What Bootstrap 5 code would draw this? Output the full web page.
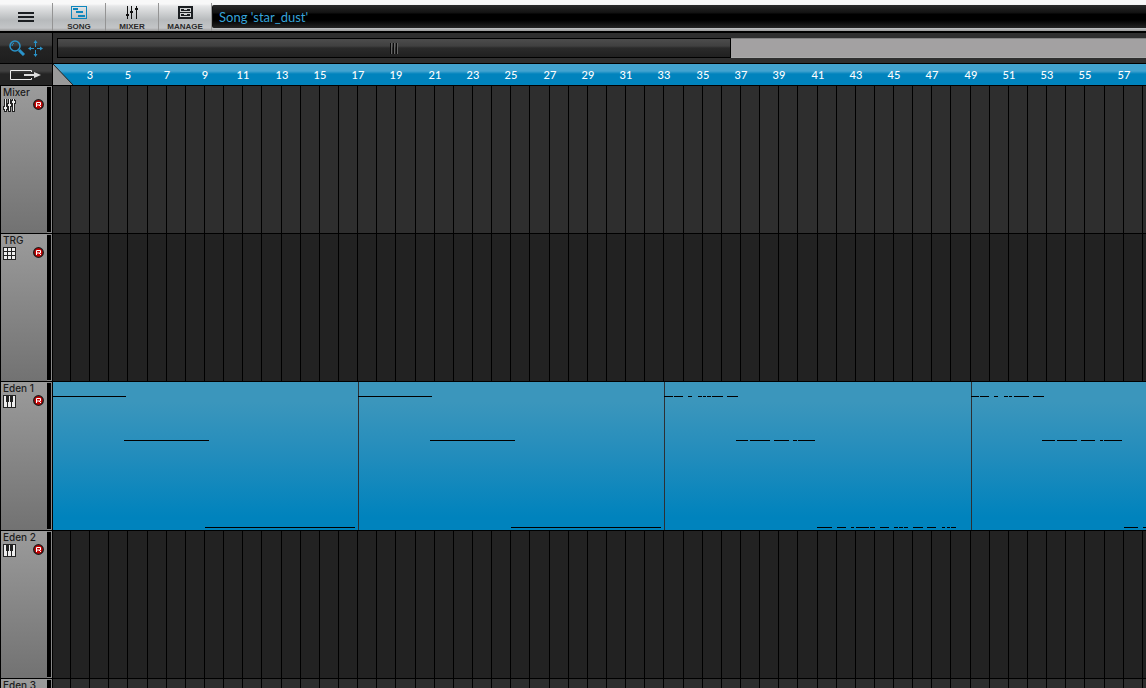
<!DOCTYPE html>
<html lang="en">
<head>
<meta charset="utf-8">
<meta name="viewport" content="width=device-width, initial-scale=1">
<title>Song editor</title>
<link href="https://cdn.jsdelivr.net/npm/bootstrap@5.3.0/dist/css/bootstrap.min.css" rel="stylesheet">
<style>
  :root { --side: 53px; }
  body { background: #222; font-family: "Lato", "Liberation Sans", sans-serif; color: #1c1c1c; }
  button { background: none; border: 0; padding: 0; color: inherit; }
  svg { display: block; }

  .topbar { height: 31px; background: linear-gradient(#f8f8f8 4px, #e6e7e8 6px, #b7babc 20px, #c3c5c7 28px, #999 31px); }
  .tool { width: 53px; padding-top: 3px; }
  .tool > span { height: 28px; border-right: 1px solid #949494; padding-top: 3px; font: bold 8px/8px "Liberation Sans", sans-serif; color: #2a2a2a; }
  .tool svg { margin-bottom: 4px; }
  .readout { margin: 5px 0 3px; background: linear-gradient(#2a2a2a, #111 8px, #000 9px, #000 15px, #242424 23px); color: #36a3d9; font-size: 13px; line-height: 24px; padding-left: 6px; border-left: 1px solid #111; border-radius: 2px 0 0 2px; }

  .side { width: var(--side); border-right: 1px solid #000; }
  .navrow { height: 33px; border-top: 2px solid #000; border-bottom: 1px solid #000; background: #2f2f2f; }
  .navtools { background: linear-gradient(#474747, #3a3a3a 12px, #242424 14px, #1e1e1e); }
  .scrolltrack { background: #a3a1a2; height: 20px; border-top: 1px solid #838383; border-bottom: 1px solid #aaa; margin: 5px 0 0 4px; }
  .thumb { height: 20px; margin-top: -1px; border: 1px solid #000; background: linear-gradient(#4c4c4c, #404040 7px, #2a2a2a 9px, #202020); }

  .rulerrow { height: 22px; border-bottom: 1px solid #000; background: linear-gradient(#42a3d0 7px, #0083bd 10px); }
  .export { background: linear-gradient(#404040 7px, #242424 10px); }
  .ruler text { fill: #fff; font: 500 11px "Lato", sans-serif; text-anchor: middle; }

  .lane { height: 148px; border-bottom: 1px solid #000; background: #222; }
  .lane.lit { background: #2e2e2e; }
  .lane.clips { height: 149px; background: linear-gradient(#3b96bc 20px, #248dbc 70px, #0083bd 135px); }
  .track { background: linear-gradient(#9b9b9b, #727272); border-left: 1px solid #000; padding: 0 3px 1px 2px; }
  .trackname { font: 500 10px/13px "Inter", sans-serif; white-space: nowrap; }
  .rec { width: 11px; height: 11px; }
  .meter { width: 5px; background: #000; border: solid #888; border-width: 1px 1px 1px 0; }
</style>
</head>
<body class="vh-100 overflow-hidden d-flex flex-column">

<header class="topbar d-flex flex-shrink-0">
  <button class="tool flex-shrink-0" type="button" aria-label="Menu">
    <span class="d-flex flex-column align-items-center">
      <svg width="16" height="20" stroke="#1b1e21" stroke-width="2"><path d="M0 7h16M0 11h16M0 15h16"/></svg>
    </span>
  </button>
  <button class="tool flex-shrink-0" type="button">
    <span class="d-flex flex-column align-items-center">
      <svg width="16" height="13" fill="#0d86bd" shape-rendering="crispEdges"><path fill-rule="evenodd" d="M0 0h16v13H0zM1 1v11h14V1z"/><path d="M2 2h5v2H2zM5 5h7v2H5zM7 9h7v2H7z"/></svg>
      SONG
    </span>
  </button>
  <button class="tool flex-shrink-0" type="button">
    <span class="d-flex flex-column align-items-center">
      <svg width="12" height="13" fill="#111" shape-rendering="crispEdges"><path d="M1 0h1v13H1zM5 0h1v13H5zM10 0h1v13h-1zM0 8h3v2H0zM4 5h3v2H4zM9 2h3v2H9z"/></svg>
      MIXER
    </span>
  </button>
  <button class="tool flex-shrink-0" type="button">
    <span class="d-flex flex-column align-items-center">
      <svg width="15" height="13" shape-rendering="crispEdges"><path fill="#1b1e21" d="M0 0h15v13H0z"/><path fill="#d0d2d3" d="M2 2h11v4H2zM2 7h11v4H2z"/><path fill="#1b1e21" d="M3 3h9v2H3zM3 8h9v2H3z"/><path fill="#d0d2d3" d="M6 3h3v1H6zM6 8h3v1H6z"/></svg>
      MANAGE
    </span>
  </button>
  <div class="readout flex-grow-1">Song 'star_dust'</div>
</header>

<div class="navrow d-flex flex-shrink-0">
  <div class="side navtools d-flex flex-shrink-0 align-items-center ps-2">
    <button type="button" aria-label="Zoom">
      <svg width="18" height="16" fill="none" stroke="#2a93c9"><circle cx="7" cy="6" r="5" stroke-width="1.5"/><path d="M4 6a3 3 0 0 1 2-3"/><path d="M11 10l5 5" stroke-width="3"/></svg>
    </button>
    <button type="button" aria-label="Pan" class="me-auto">
      <svg width="18" height="18" fill="#2a93c9"><path d="M9 2h1v6H9zM9 11h1v6H9zM3 9h5v1H3zM11 9h5v1h-5z" shape-rendering="crispEdges"/><path d="M9.500 1l2 3h-4zM9.500 18l-2-3h4zM2 9.500l3-2v4zM17 9.500l-3-2v4z"/></svg>
    </button>
  </div>
  <div class="flex-grow-1">
    <div class="scrolltrack" role="scrollbar" aria-label="Song position" aria-controls="lanes" aria-valuenow="0">
      <div class="thumb d-flex justify-content-center align-items-center" style="width:61.9%">
        <svg width="9" height="11" shape-rendering="crispEdges"><path fill="#090909" d="M0 0h1v11H0zM3 0h1v11H3zM6 0h1v11H6z"/><path fill="#666" d="M1 0h1v11H1zM4 0h1v11H4zM7 0h1v11H7z"/></svg>
      </div>
    </div>
  </div>
</div>

<div class="rulerrow d-flex flex-shrink-0">
  <button class="side export flex-shrink-0 d-flex align-items-center" type="button" aria-label="Follow playback">
    <svg width="42" height="13" fill="none"><path d="M31.500 4V2.500h-21v9h21V10" stroke="#eee"/><path d="M24 6h10V4l7 3-7 3V8H24z" fill="#ddd"/></svg>
  </button>
  <svg class="ruler flex-grow-1" height="21"><path d="M0 0l20 21H0z" fill="#999"/><path d="M0 0l20 21" stroke="#222"/></svg>
</div>

<main id="lanes" class="flex-grow-1 overflow-hidden"></main>

<svg width="0" height="0" class="position-absolute" aria-hidden="true">
  <symbol id="i-mixer" viewBox="0 0 13 13"><g shape-rendering="crispEdges"><path fill="#222" d="M1 0h3v13H1zM5 0h3v13H5zM9 0h3v13H9zM0 7h5v4H0zM4 4h5v4H4zM8 1h5v4H8z"/><path fill="#eee" d="M2 0h1v12H2zM6 0h1v12H6zM10 0h1v12h-1zM1 8h3v2H1zM5 5h3v2H5zM9 2h3v2H9z"/></g></symbol>
  <symbol id="i-grid" viewBox="0 0 13 13"><g shape-rendering="crispEdges"><path fill="#222" d="M0 0h13v13H0z"/><path fill="#eee" d="M1 1h3v3H1zM5 1h3v3H5zM9 1h3v3H9zM1 5h3v3H1zM5 5h3v3H5zM9 5h3v3H9zM1 9h3v3H1zM5 9h3v3H5zM9 9h3v3H9z"/></g></symbol>
  <symbol id="i-keys" viewBox="0 0 13 13"><g shape-rendering="crispEdges"><path fill="#222" d="M0 0h13v13H0z"/><path fill="#eee" d="M1 1h11v11H1z"/><path fill="#222" d="M3 1h3v6H3zM7 1h3v6H7zM4 7h1v5H4zM8 7h1v5H8z"/></g></symbol>
  <symbol id="i-rec" viewBox="0 0 11 11"><circle cx="5.500" cy="5.500" r="4.800" fill="#c80000" stroke="#1a1a1a" stroke-width="1.300"/><path d="M3.500 8V3.500h4v2.500h-4M6 6l2 2" fill="none" stroke="#fff"/></symbol>
</svg>

<script src="https://cdn.jsdelivr.net/npm/bootstrap@5.3.0/dist/js/bootstrap.bundle.min.js"></script>
<script>
  const BAR = 19.14, OFFSET = -1.6;
  const barX = k => Math.floor(OFFSET + BAR * k);

  // Notes are [start, end] pairs for each of the three pitches a clip plays.
  const held = [[[0, 74]], [[72, 157]], [[153, 303]]];
  const clips = [
    { x: -1, notes: held },
    { x: 305, notes: held },
    { x: 611, notes: [
      [[0,9],[10,19],[24,28],[34,38],[39,42],[43,47],[48,59],[63,74]],
      [[72,84],[86,106],[110,125],[129,133],[134,151]],
      [[153,168],[173,182],[187,190],[192,205],[206,211],[216,225],[230,234],[235,239],[240,244],[249,259],[263,272],[278,281],[283,286],[287,292]] ] },
    { x: 918, notes: [
      [[0,8],[9,18],[23,27],[33,37],[38,41],[43,58],[62,73]],
      [[71,84],[86,106],[110,124],[129,132],[133,151]],
      [[153,167],[172,181]] ] }
  ];
  const pitchY = [14, 58, 145];
  const tracks = [
    { name: 'Mixer', icon: 'mixer', look: 'lit' },
    { name: 'TRG', icon: 'grid', look: '' },
    { name: 'Eden 1', icon: 'keys', look: 'clips' },
    { name: 'Eden 2', icon: 'keys', look: '' },
    { name: 'Eden 3', icon: 'keys', look: 'lit' }
  ];

  const ruler = document.querySelector('.ruler');
  const laneWidth = ruler.getBoundingClientRect().width;
  const bars = Math.ceil(laneWidth / BAR);
  const gridPath = Array.from({ length: bars }, (_, i) => `M${barX(i + 1)} 0h1v148h-1z`).join('');
  const clipArt = clips.map(c =>
    `<rect x="${c.x}" width="1" height="148" fill="#2c3034"/>` +
    c.notes.map((row, p) => row.map(([a, b]) =>
      `<rect x="${c.x + a}" y="${pitchY[p]}" width="${b - a}" height="1"/>`).join('')).join('')).join('');

  let numbers = '';
  for (let n = 3; barX(n - 1) + 8 < laneWidth; n += 2) numbers += `<text x="${barX(n - 1) + 1}" y="15">${n}</text>`;
  ruler.insertAdjacentHTML('beforeend', numbers);

  document.getElementById('lanes').innerHTML = tracks.map(t => `
    <section class="lane ${t.look} d-flex">
      <div class="side d-flex flex-shrink-0">
        <div class="track flex-grow-1">
          <div class="trackname">${t.name}</div>
          <div class="d-flex justify-content-between">
            <svg width="13" height="13"><use href="#i-${t.icon}"/></svg>
            <button class="rec" type="button" aria-label="Record ${t.name}"><svg width="11" height="11"><use href="#i-rec"/></svg></button>
          </div>
        </div>
        <div class="meter"></div>
      </div>
      <svg class="flex-grow-1" height="148" shape-rendering="crispEdges">${t.look === 'clips' ? clipArt : `<path d="${gridPath}"/>`}</svg>
    </section>`).join('');
</script>
</body>
</html>
